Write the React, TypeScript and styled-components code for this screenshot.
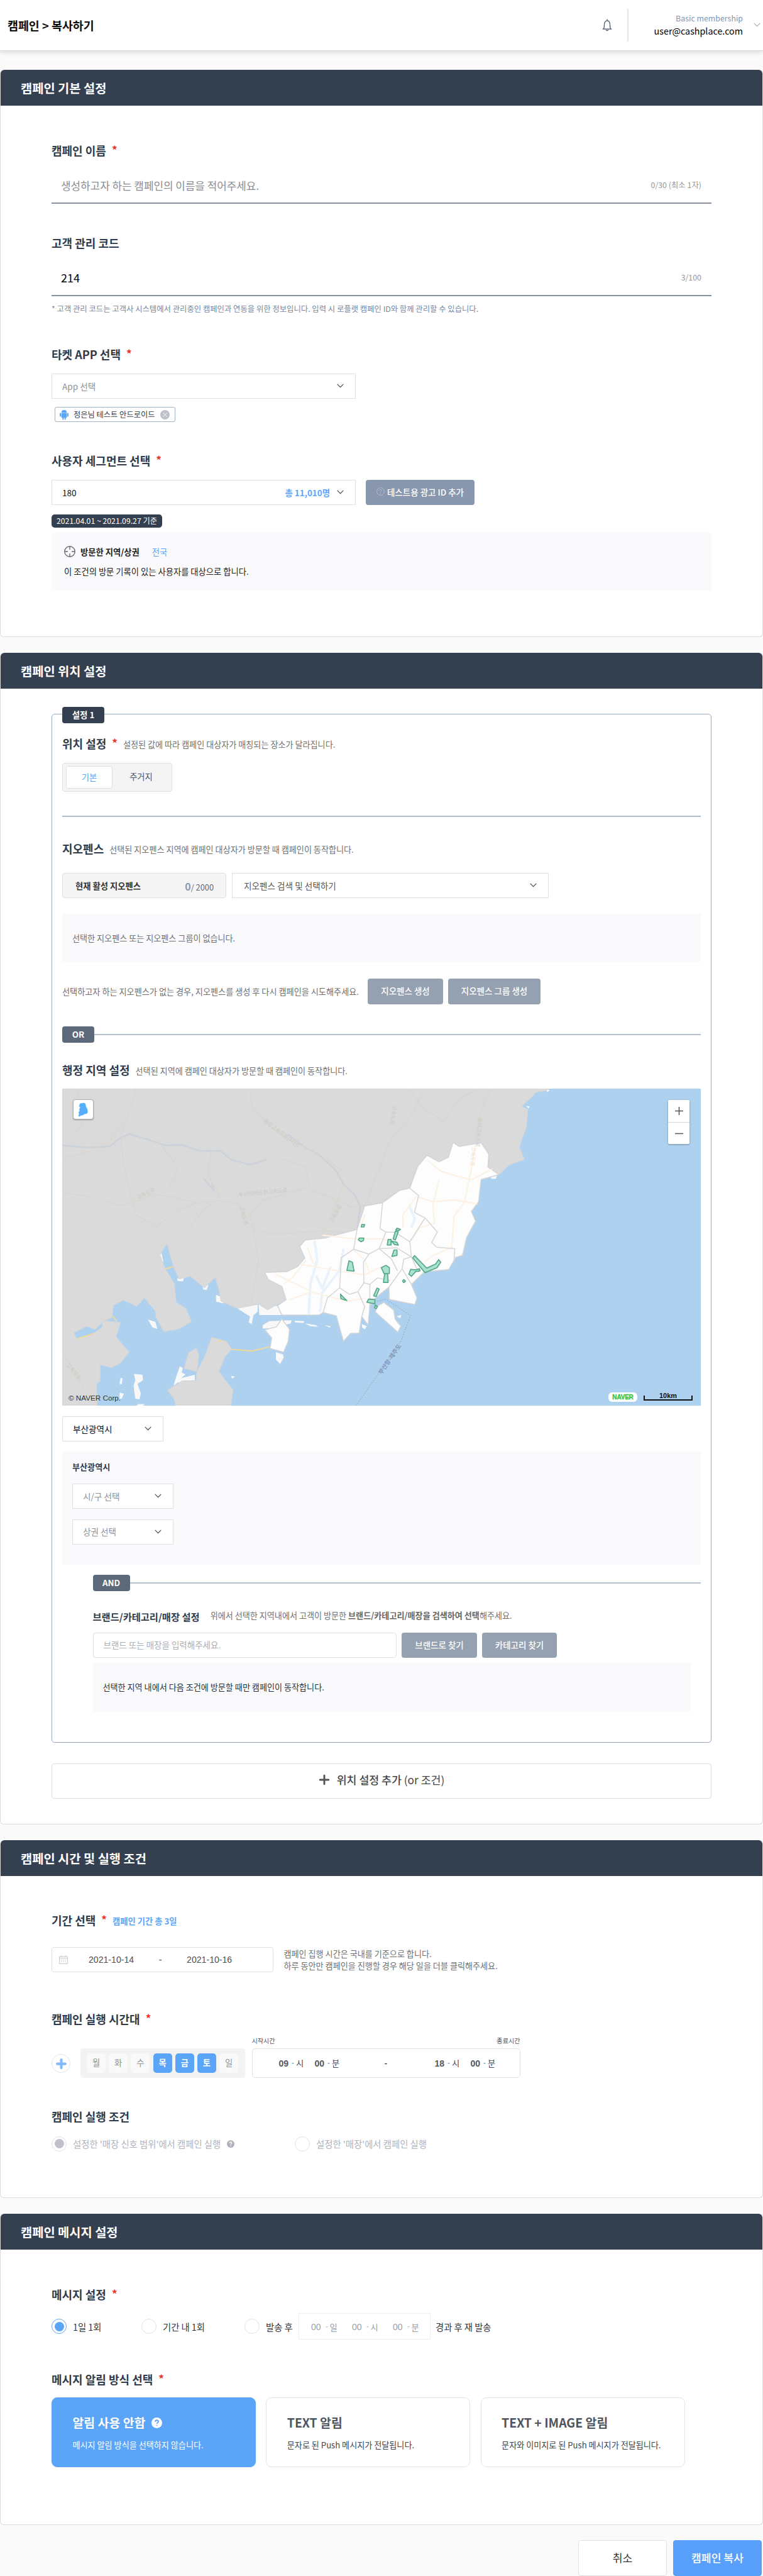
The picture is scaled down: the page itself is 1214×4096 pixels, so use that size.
import React from 'react';
import styled, { createGlobalStyle, css } from 'styled-components';

const sans = `'Noto Sans CJK KR', 'Noto Sans', sans-serif`;
const arial = `'Liberation Sans', 'Noto Sans CJK KR', sans-serif`;
const c = {
  navy: '#343f4f',
  ink: '#303b4b',
  slate: '#5c6979',
  blue: '#5ba5f8',
  muted: '#707070',
  pale: '#fafafc',
  line: '#dfe0e6',
  btn: '#95a1b0',
};

const Global = createGlobalStyle`
  * { box-sizing: border-box; }
  body { margin: 0; background: #fafafa; font-family: ${sans}; font-size: 13.2px; color: #222; }
  svg { display: block; flex: none; }
  button { font: inherit; padding: 0; margin: 0; }
`;

const Page = styled.div`
  width: 1214px;
  height: 4096px;
  overflow: hidden;
  background: #fafafa;
`;

/* ---------- top bar ---------- */
const TopBar = styled.header`
  height: 81px;
  display: flex;
  align-items: center;
  padding: 0 4px 1px 12px;
  background: #fff;
  border-bottom: 1px solid #d8d8d8;
  box-shadow: 0 2px 8px rgba(0, 0, 0, 0.14);
`;
const Crumb = styled.h1`
  margin: 0;
  flex: 1;
  font-size: 18.4px;
  font-weight: 700;
  color: #0c0c0c;
`;
const Divider = styled.i`
  width: 2px;
  height: 52px;
  margin-left: 24px;
  background: #e5e5e5;
`;
const Account = styled.div`
  width: 182px;
  margin-right: 17px;
  text-align: right;
  font-weight: 400;
  font-size: 14.3px;
  line-height: 20px;
  color: #000;
`;
const Plan = styled.div`
  font-size: 12.4px;
  font-weight: 400;
  line-height: 19px;
  color: #8295ad;
`;

/* ---------- cards ---------- */
const Card = styled.section<{ $top: number; $end: number }>`
  margin-top: ${p => p.$top}px;
  padding-bottom: ${p => p.$end}px;
  background: #fff;
  border: 1px solid #dcdcdc;
  border-top: 0;
  border-radius: 6px;
`;
const CardHead = styled.h2`
  margin: 0;
  height: 57px;
  padding-left: 32px;
  line-height: 58px;
  background: ${c.navy};
  border-radius: 6px 6px 0 0;
  font-size: 19.8px;
  font-weight: 700;
  color: #fff;
`;
const CardBody = styled.div`
  padding: 0 81px;
`;
const LabelRow = styled.div<{ $top: number }>`
  display: flex;
  align-items: center;
  height: 26px;
  margin-top: ${p => p.$top}px;
`;
const Label = styled.h3<{ $small?: boolean }>`
  margin: -1px 0 0;
  line-height: 26px;
  font-size: ${p => (p.$small ? 15.3 : 18)}px;
  font-weight: 700;
  color: ${c.ink};
  white-space: nowrap;
`;
const Star = styled.span`
  align-self: flex-start;
  margin: -1px 0 0 9px;
  line-height: 26px;
  font-size: 17px;
  font-weight: 700;
  color: #ee3124;
`;
const Desc = styled.span<{ $gap?: number; $blue?: boolean; $lift?: number }>`
  margin-left: ${p => p.$gap ?? 9}px;
  margin-top: ${p => p.$lift ?? 2}px;
  font-size: ${p => (p.$blue ? 13.3 : 13.1)}px;
  font-weight: ${p => (p.$blue ? 700 : 400)};
  color: ${p => (p.$blue ? c.blue : c.muted)};
  white-space: nowrap;
  b { font-weight: 700; color: #666; }
`;
const Row = styled.div<{ $top?: number; $gap?: number; $h?: number }>`
  display: flex;
  align-items: center;
  margin-top: ${p => p.$top ?? 0}px;
  gap: ${p => p.$gap ?? 0}px;
  ${p => p.$h && css`height: ${p.$h}px;`}
`;
const LineInput = styled.div<{ $top: number; $filled?: boolean }>`
  display: flex;
  align-items: center;
  justify-content: space-between;
  height: 58px;
  margin-top: ${p => p.$top}px;
  padding: 0 16px 0 15px;
  border-bottom: 2px solid ${p => (p.$filled ? '#8492a3' : '#8a92a0')};
  font-size: ${p => (p.$filled ? 18 : 16.9)}px;
  font-weight: 400;
  color: ${p => (p.$filled ? '#000' : '#8a8d92')};
`;
const Counter = styled.span`
  font-size: 12.4px;
  font-weight: 400;
  color: #94989e;
`;
const Hint = styled.p`
  margin: 10px 0 0;
  line-height: 20px;
  font-size: 12.35px;
  color: #7488a1;
`;
const SelectBox = styled.div<{ $w: number; $tone?: string; $pad?: number }>`
  display: flex;
  align-items: center;
  width: ${p => p.$w}px;
  height: 40px;
  padding: 0 18px 1px ${p => p.$pad ?? 16}px;
  background: #fff;
  border: 1px solid ${c.line};
  font-size: 13.6px;
  color: ${p => p.$tone ?? '#8e9298'};
  svg { margin-left: auto; }
`;
const Total = styled.b`
  margin-left: auto;
  margin-right: 11px;
  font-size: 13.4px;
  font-weight: 700;
  color: ${c.blue};
  & + svg { margin-left: 0; }
`;
const AppTag = styled.div`
  display: flex;
  align-items: center;
  width: 192px;
  height: 24px;
  margin: 13px 0 0 5px;
  padding: 0 8px 0 7px;
  border: 1px solid #a4b2c5;
  border-radius: 3px;
  font-size: 12.25px;
  color: #333b47;
  span { flex: 1; margin-left: 8px; }
`;
const Button = styled.button<{ $w: number; $tone?: string }>`
  display: flex;
  align-items: center;
  justify-content: center;
  gap: 4px;
  width: ${p => p.$w}px;
  height: 40.5px;
  padding-bottom: 3px;
  border: 0;
  border-radius: 4px;
  background: ${p => p.$tone ?? c.btn};
  font-size: 13.5px;
  font-weight: 500;
  color: #fff;
`;
const DateTag = styled.div`
  width: 176px;
  height: 21px;
  margin-top: 15px;
  border-radius: 5px;
  background: ${c.navy};
  line-height: 20px;
  text-align: center;
  font-size: 12.25px;
  color: #fff;
`;
const Panel = styled.div<{ $top: number; $h: number; $pad?: number; $tone?: string; $right?: number }>`
  display: flex;
  flex-direction: column;
  justify-content: center;
  height: ${p => p.$h}px;
  margin: ${p => p.$top}px ${p => p.$right ?? 0}px 0 0;
  padding-left: ${p => p.$pad ?? 16}px;
  padding-bottom: 1px;
  background: ${c.pale};
  font-size: 13.1px;
  color: ${p => p.$tone ?? c.muted};
`;
const VisitLine = styled.div`
  display: flex;
  align-items: center;
  gap: 8px;
  height: 24px;
  margin-bottom: 9px;
  font-size: 13.3px;
  b { font-weight: 700; color: #222; margin-right: 12px; }
  span { color: ${c.blue}; }
`;
const VisitNote = styled.div`
  height: 22px;
  line-height: 22px;
  font-size: 13.3px;
  color: #222;
`;

/* ---------- location group ---------- */
const Group = styled.div`
  height: 1636px;
  margin-top: 40px;
  padding: 0 16px;
  border: 1px solid #97a8bd;
  border-radius: 5px;
`;
const Badge = styled.div<{ $w: number; $tone: string }>`
  width: ${p => p.$w}px;
  height: 26px;
  flex: none;
  border-radius: 4px;
  background: ${p => p.$tone};
  line-height: 24px;
  text-align: center;
  font-size: 13.4px;
  font-weight: 700;
  color: #fff;
`;
const GroupBadge = styled(Badge)`
  margin-top: -12px;
`;
const Segmented = styled.div`
  display: flex;
  width: 175px;
  height: 46px;
  margin-top: 18px;
  padding: 4px 5px;
  background: #f4f4f4;
  border: 1px solid #e1e1e1;
  border-radius: 4px;
`;
const Segment = styled.div<{ $on?: boolean }>`
  flex: none;
  width: ${p => (p.$on ? 74 : 91)}px;
  line-height: 34px;
  text-align: center;
  font-size: 13.3px;
  border-radius: 4px;
  color: ${p => (p.$on ? c.blue : '#4c5562')};
  ${p => p.$on && css`background: #fff; border: 1px solid #dedede;`}
`;
const Rule = styled.hr`
  height: 2px;
  margin: 38px 0 0;
  border: 0;
  background: #b0bdcc;
`;
const ActiveCount = styled.div`
  display: flex;
  align-items: center;
  width: 261px;
  height: 40px;
  padding: 1px 19px 0 20px;
  background: #f5f5f5;
  border: 1px solid #dfe0e6;
  border-radius: 4px;
  font-size: 13.3px;
  font-weight: 700;
  color: #333;
  span { margin-left: auto; font-size: 12.8px; font-weight: 400; color: #5c6979; }
  b { font-size: 16px; font-weight: 700; color: #8799b0; }
`;
const RowText = styled.span`
  width: 486px;
  font-size: 13.15px;
  color: ${c.muted};
  white-space: nowrap;
`;
const Joint = styled.div<{ $top: number; $left?: number }>`
  display: flex;
  align-items: center;
  margin: ${p => p.$top}px 0 0 ${p => p.$left ?? 0}px;
  &::after { content: ''; flex: 1; height: 2px; margin-bottom: 1px; background: #b4c0ce; }
`;
const Nested = styled.div`
  margin-left: 48.5px;
`;
const AreaName = styled.b`
  line-height: 24px;
  margin-bottom: 14px;
  font-size: 13.1px;
  font-weight: 700;
  color: ${c.ink};
`;
const AreaPanel = styled.div`
  display: flex;
  flex-direction: column;
  height: 180px;
  margin-top: 16px;
  padding: 13px 0 0 16px;
  background: ${c.pale};
`;
const AreaSelects = styled.div`
  display: grid;
  gap: 16.5px;
`;
const SearchInput = styled.div`
  width: 483.5px;
  height: 40px;
  padding-left: 16px;
  line-height: 37px;
  border: 1px solid ${c.line};
  border-radius: 4px;
  font-size: 13.5px;
  color: #abb0b8;
`;
const AddButton = styled.button`
  display: flex;
  align-items: center;
  justify-content: center;
  gap: 11px;
  width: 100%;
  height: 56px;
  margin-top: 33px;
  padding-bottom: 5px;
  background: #fff;
  border: 1px solid #e0e0e0;
  border-radius: 4px;
  font-size: 17.3px;
  font-weight: 500;
  color: #444;
  em { font-style: normal; font-weight: 400; }
`;

/* ---------- map ---------- */
const MapFrame = styled.div`
  position: relative;
  height: 504px;
  margin-top: 17px;
  overflow: hidden;
  background: #aed1ef;
`;
const MapLabels = styled.svg`
  position: absolute;
  inset: 0;
`;
const RegionButton = styled.div`
  position: absolute;
  left: 17px;
  top: 17px;
  width: 33px;
  height: 32px;
  padding: 4px 7px;
  background: #fff;
  border: 1px solid #b0b0b0;
  border-radius: 4px;
  box-shadow: 0 1px 2px rgba(0, 0, 0, 0.3);
`;
const ZoomControl = styled.div`
  position: absolute;
  right: 18px;
  top: 18px;
  width: 34px;
  background: #fff;
  border-radius: 2px;
  box-shadow: 0 1px 3px rgba(0, 0, 0, 0.35);
`;
const ZoomStep = styled.div`
  display: flex;
  align-items: center;
  justify-content: center;
  height: 35px;
  & + & { border-top: 1px solid #d8d8d8; }
`;
const Copyright = styled.div`
  position: absolute;
  left: 10px;
  bottom: 3px;
  line-height: 18px;
  font-family: ${arial};
  font-size: 11.7px;
  color: #333;
`;
const NaverMark = styled.div`
  position: absolute;
  right: 101px;
  bottom: 6px;
  width: 46px;
  height: 15px;
  border-radius: 6px;
  background: #fff;
  line-height: 15px;
  text-align: center;
  font-family: ${arial};
  font-size: 10px;
  font-weight: 700;
  letter-spacing: -0.2px;
  color: #3fc43f;
  -webkit-text-stroke: 0.4px #3fc43f;
`;
const ScaleBar = styled.div`
  position: absolute;
  right: 13px;
  bottom: 8px;
  width: 78px;
  height: 8px;
  border: 2px solid #111;
  border-top: 0;
  line-height: 1px;
  text-align: center;
  font-family: ${arial};
  font-size: 11px;
  font-weight: 700;
  color: #111;
`;

/* ---------- schedule ---------- */
const DateRange = styled.div`
  display: flex;
  align-items: center;
  width: 353px;
  height: 40px;
  padding-left: 11px;
  border: 1px solid ${c.line};
  border-radius: 4px;
  font-family: ${arial};
  font-size: 14.1px;
  color: #4c4f55;
  i { font-style: normal; width: 84px; text-align: center; color: #444; }
`;
const DateText = styled.span<{ $first?: boolean }>`
  margin-left: ${p => (p.$first ? 33 : 0)}px;
`;
const Info = styled.p`
  margin: 0 0 0 16.5px;
  line-height: 19.5px;
  font-size: 13.1px;
  color: ${c.muted};
`;
const TimeRow = styled.div`
  display: flex;
  align-items: flex-end;
  margin-top: 15px;
`;
const AddTime = styled.div`
  display: flex;
  align-items: center;
  justify-content: center;
  width: 30px;
  height: 30px;
  margin: 0 16px 8px 0;
  border: 1px solid #e3e4e8;
  border-radius: 50%;
`;
const Week = styled.div`
  display: flex;
  align-items: center;
  gap: 5.2px;
  width: 262px;
  height: 47px;
  padding-left: 10px;
  background: #f3f3f3;
  border-radius: 4px;
`;
const Day = styled.span<{ $on: boolean }>`
  width: 30px;
  height: 31px;
  line-height: 29px;
  text-align: center;
  border-radius: 5px;
  font-size: 13.3px;
  background: ${p => (p.$on ? c.blue : '#f9f9f9')};
  color: ${p => (p.$on ? '#fff' : '#8e9299')};
  font-weight: ${p => (p.$on ? 700 : 400)};
`;
const TimeColumn = styled.div`
  width: 427px;
  margin-left: 10.5px;
`;
const TimeCaptions = styled.div`
  display: flex;
  justify-content: space-between;
  height: 19px;
  line-height: 14px;
  font-size: 10.1px;
  color: #4c5562;
`;
const TimeBox = styled.div`
  display: flex;
  align-items: center;
  height: 47px;
  padding-left: 42px;
  border: 1px solid ${c.line};
  border-radius: 5px;
`;
const Unit = styled.span<{ $w: number; $off?: boolean }>`
  display: flex;
  align-items: center;
  width: ${p => p.$w}px;
  font-size: 13.3px;
  color: ${p => (p.$off ? '#979da7' : '#3f4c60')};
  b {
    font-family: ${arial};
    font-size: 14px;
    font-weight: ${p => (p.$off ? 400 : 700)};
    color: ${p => (p.$off ? '#9a9fa8' : '#55585e')};
  }
`;
const Caret = styled.i<{ $off?: boolean }>`
  margin: 0 3px 0 ${p => (p.$off ? 7 : 5)}px;
  border: 2px solid transparent;
  border-top-color: ${p => (p.$off ? '#b8c4d6' : '#7c9cc4')};
  border-bottom: 0;
`;
const Dash = styled.i`
  width: 153px;
  padding-left: 73px;
  font-style: normal;
  font-family: ${arial};
  font-size: 14px;
  color: #222;
`;
const Radio = styled.span<{ $on?: boolean; $off?: boolean }>`
  display: flex;
  flex: none;
  align-items: center;
  justify-content: center;
  width: 24px;
  height: 24px;
  border-radius: 50%;
  border: 1px solid ${p => (p.$on && !p.$off ? c.blue : '#e0e1e6')};
  &::after {
    content: '';
    width: 15px;
    height: 15px;
    border-radius: 50%;
    background: ${p => (!p.$on ? 'transparent' : p.$off ? '#bfc2cb' : c.blue)};
  }
`;
const RadioText = styled.span<{ $off?: boolean; $w?: number; $gap?: number }>`
  ${p => p.$w && css`width: ${p.$w}px;`}
  display: flex;
  align-items: center;
  gap: 10px;
  margin-left: ${p => p.$gap ?? 10}px;
  font-size: ${p => (p.$off ? 14.35 : 14.3)}px;
  color: ${p => (p.$off ? '#b0b3bc' : '#33363c')};
  white-space: nowrap;
`;
const DelayBox = styled.div`
  display: flex;
  align-items: center;
  width: 210px;
  height: 41.5px;
  padding: 2px 0 0 19px;
  border: 1px solid #eeeeef;
`;
const Choice = styled.div<{ $on?: boolean }>`
  width: 325px;
  height: 111px;
  padding: 25px 0 0 32.5px;
  border: 1px solid ${p => (p.$on ? c.blue : '#e3e4ea')};
  border-radius: 9px;
  background: ${p => (p.$on ? c.blue : '#fff')};
  font-size: 13.1px;
  line-height: 22px;
  color: ${p => (p.$on ? '#fff' : '#3c4552')};
  h4 {
    display: flex;
    align-items: center;
    gap: 10px;
    height: 28px;
    margin: 0 0 11px;
    font-size: 19.4px;
    font-weight: 700;
    color: ${p => (p.$on ? '#fff' : '#4c5562')};
  }
`;
const Footer = styled.footer`
  display: flex;
  justify-content: flex-end;
  gap: 10px;
  margin-top: 24px;
  padding-right: 2px;
`;
const FootButton = styled.button<{ $primary?: boolean }>`
  width: 141px;
  height: 57px;
  padding-bottom: 3px;
  border: 1px solid ${p => (p.$primary ? '#589ff9' : '#e0e1e6')};
  border-radius: 4px;
  background: ${p => (p.$primary ? '#589ff9' : '#fff')};
  font-size: 17.2px;
  font-weight: ${p => (p.$primary ? 500 : 400)};
  color: ${p => (p.$primary ? '#fff' : '#333')};
`;

/* ---------- icons ---------- */
const Chevron = ({ color = '#444' }: { color?: string }) => (
  <svg width="11" height="7" viewBox="0 0 11 7" fill="none" stroke={color} strokeWidth="1.1">
    <path d="M.7.9 5.5 5.7 10.3.9" />
  </svg>
);
const Bell = () => (
  <svg width="16" height="20" viewBox="0 0 16 20" fill="none" stroke="#46536a" strokeWidth="1.3">
    <path d="M8 .6v2M.7 16.2h14.6M2.4 16c.9-1.1 1-2.6 1-5.3C3.4 6 4.9 2.8 8 2.8s4.6 3.2 4.6 7.9c0 2.700.1 4.200 1 5.300" />
    <path d="M6.300 17.300a1.700 1.400 0 0 0 3.400 0" />
  </svg>
);
const Android = () => (
  <svg width="14" height="17" viewBox="0 0 14 17" fill="#5ba5f8">
    <path d="M2.600 5.100a4.400 4 0 0 1 8.800 0z" />
    <path d="M4 .4 5.200 2M10 .4 8.800 2" stroke="#5ba5f8" strokeWidth=".7" />
    <rect x="2.600" y="5.600" width="8.800" height="7.600" rx=".8" />
    <rect x=".1" y="5.500" width="1.900" height="6" rx=".9" />
    <rect x="12" y="5.500" width="1.900" height="6" rx=".9" />
    <rect x="4.300" y="12" width="2" height="4.500" rx=".9" />
    <rect x="7.700" y="12" width="2" height="4.500" rx=".9" />
  </svg>
);
const CloseDot = () => (
  <svg width="15" height="15" viewBox="0 0 15 15">
    <circle cx="7.500" cy="7.500" r="7.500" fill="#bfc1c8" />
    <path d="m4.300 4.300 6.400 6.400m0-6.400-6.400 6.400" stroke="#fff" strokeWidth="1" />
  </svg>
);
const Question = ({ size, fill, mark, outline }: { size: number; fill: string; mark: string; outline?: boolean }) => (
  <svg width={size} height={size} viewBox="0 0 16 16">
    {outline ? <circle cx="8" cy="8" r="7.300" fill="none" stroke={fill} strokeWidth="1" /> : <circle cx="8" cy="8" r="8" fill={fill} />}
    <path
      d="M5.700 6.300c.1-1.500 1-2.300 2.300-2.300s2.300.8 2.300 2c0 1.600-2.200 1.700-2.200 3.500M8 11v1.500"
      fill="none"
      stroke={mark}
      strokeWidth={outline ? 1 : 1.700}
    />
  </svg>
);
const Target = () => (
  <svg width="18" height="18" viewBox="0 0 18 18" fill="none" stroke="#666a70" strokeWidth="1.400">
    <circle cx="9" cy="9" r="8.200" />
    <path d="M9 1v5M9 12v5M1 9h5M12 9h5" />
  </svg>
);
const Plus = ({ size, color, weight }: { size: number; color: string; weight: number }) => (
  <svg width={size} height={size} viewBox="0 0 16 16" stroke={color} strokeWidth={weight} strokeLinecap="round">
    <path d="M8 2v12M2 8h12" />
  </svg>
);
const Calendar = () => (
  <svg width="14" height="14" viewBox="0 0 14 14" fill="none" stroke="#c3c6ce" strokeWidth="1">
    <path d="M.6 1.900h12.800v11.500H.6zM.6 4.700h12.800M3.700.4v2.500M10.300.4v2.500" />
    <path d="M3 7.400h1.600M6.200 7.400h1.600M9.400 7.400H11M3 10.200h1.600M6.200 10.200h1.600M9.400 10.200H11" />
  </svg>
);
const Korea = () => (
  <svg width="17" height="23" viewBox="0 0 17 23" fill="#55aefb">
    <path d="M3.500 1.500 10 .4l2 1.800 1.200 5.200 2 3.400.4 5-1.600 2.200-3.700.6-2.200 1.700-3.100.5-3 1.800-1.200-1.300 1-3.200L1 15.600l1.700-2.200L2 10.400l1.600-2.200L1.600 5.500z" />
  </svg>
);

/* ---------- map drawing ---------- */
const grayLand = [
  '28,58 1178,58 1160,70 1142,75 1135,95 1120,120 1110,140 1124,155 1120,240 1112,280 1104,330 1116,385 1080,410 1056,455 1030,420 1032,360 1014,308 962,325 948,306 937,375 915,396 887,366 865,415 846,518 822,528 782,585 740,600 722,708 647,748 600,757 587,787 599,840 582,880 557,903 505,907 513,940 545,972 555,1033 511,1080 490,1053 440,1073 402,1040 397,985 388,930 363,978 330,925 303,937 290,880 282,830 275,772 258,825 268,880 292,960 296,1045 320,1075 332,1135 300,1170 267,1180 249,1115 247,1085 221,1024 204,1064 172,1035 149,1058 145,1115 126,1132 105,1170 85,1155 56,1185 62,1215 100,1190 122,1160 124,1130 165,1138 155,1205 186,1275 165,1325 145,1347 118,1333 117,1410 109,1425 110,1522 28,1522',
  '380,1207 415,1225 427,1262 410,1300 397,1365 430,1450 425,1522 295,1522 292,1495 276,1450 310,1408 343,1406 345,1365 362,1300',
  '343,1255 350,1290 345,1365 315,1350 325,1280',
];
const busan = [
  '948,306 962,325 1014,308 1032,360 1030,420 1056,455 1014,478 1008,580 991,625 1001,670 980,745 970,828 954,838 938,893 880,905 850,962 863,1025 858,1055 798,1032 797,975 765,1025 752,1060 748,1150 733,1110 727,1187 707,1188 690,1225 673,1107 642,1092 632,1104 545,1104 535,1060 555,1033 545,972 513,940 505,907 557,903 582,880 599,840 587,787 600,757 647,748 722,708 740,600 782,585 822,528 846,518 865,415 887,366 915,396 937,375',
  '785,1045 808,1080 812,1125 825,1155 818,1183 765,1090 768,1065',
  '545,1122 563,1170 560,1225 549,1275 517,1258 521,1210 505,1172 532,1158',
];
const shoals = [
  '490,1055 540,1062 545,1104 492,1104',
  '440,1073 488,1055 488,1088 478,1105 474,1145 467,1138 470,1110',
  '500,1150 515,1132 568,1128 566,1142 520,1165 500,1166',
  '390,1010 402,1020 408,1050 390,1042',
  '230,1125 247,1135 252,1168 240,1160',
  '197,1375 217,1380 218,1405 205,1422 213,1465 210,1493 200,1490 196,1430 200,1405',
  '305,1340 312,1350 309,1368 318,1378 308,1395 340,1380 340,1405 300,1415 290,1430 296,1390',
  '531,1275 548,1285 549,1300 541,1330 531,1310',
  '733,1145 745,1155 740,1170 734,1162',
  '815,1110 826,1102 824,1118',
  '1036,466 1052,458 1048,475 1038,474',
  '1165,64 1175,64 1171,74',
  '1120,138 1128,140 1126,150',
  '575,1130 598,1132 596,1140 576,1138',
  '600,1142 625,1150 630,1158 612,1155',
  '645,1150 660,1155 658,1162',
  '358,960 372,965 368,988 360,985',
  '255,810 262,820 266,858 258,858',
  '298,935 315,930 312,948 300,946',
  '165,1395 170,1395 168,1425 163,1420',
  '163,1462 173,1467 168,1490 163,1490',
  '205,1515 222,1515 218,1522 205,1522',
  '425,1385 435,1388 428,1397',
];
const districts = [
  'M846 518 867 552 857 630 882 655 911 720 898 768 909 790 952 797 950 860',
  'M882 655 846 765 812 722 790 720 776 705 782 585',
  'M846 765 850 835 832 845 828 890 797 975',
  'M790 720 774 797 750 822 714 800 722 708',
  'M774 797 815 793 850 835M774 797 803 845 817 900',
  'M714 800 685 838 681 978 704 1008 724 996 738 955 737 860 750 822',
  'M681 978 652 1025 642 1092M724 996 740 1065 733 1110',
  'M738 955 752 962 752 1060M752 962 770 932 800 945M828 890 850 962M850 835 866 905',
];
const zones = [
  '733,686 740,686 738,697 732,697',
  '727,748 738,748 737,760 731,765 725,757',
  '816,702 824,708 820,714 813,711',
  '812,717 819,719 812,757 807,752',
  '795,755 802,755 802,780 793,780',
  '803,762 816,768 819,781 810,778',
  '809,803 816,803 816,828 804,833',
  '703,853 711,860 715,901 698,898 701,870',
  '779,885 790,874 798,885 798,912 786,914',
  '787,914 794,912 795,953 784,953',
  '853,840 857,829 886,887 907,868 914,848 919,860 910,885 882,908',
  '848,893 860,895 869,890 870,900 860,903 850,925 844,915',
  '832,940 836,948 832,954 829,947',
  '769,979 774,984 767,1018 761,1015',
  '683,1007 690,1022 698,1037 684,1028',
  '749,1030 764,1032 764,1052 745,1045',
  '765,1058 770,1064 767,1075 763,1070',
];
const grayRoads = [
  'M28 540 90 555 165 598 210 575 240 545 290 560 345 585 400 575 440 590 470 640 500 575 600 515 660 560 710 605 770 590 822 528',
  'M200 58 190 150 165 270 172 400 190 560 200 640 250 695 300 620 345 585',
  'M470 58 475 140 520 240 570 300 640 370 690 440',
  'M470 640 480 720 490 860 472 1055',
  'M480 710 530 730 640 715 690 720',
  'M880 58 850 180 800 300 780 400 770 450 740 600',
  'M845 65 880 150 925 210 965 100 1010 58',
  'M1035 58 1010 190 1000 290',
  'M28 380 90 350 140 300 170 210 M60 58 90 180 60 260',
  'M250 290 300 420 280 520 M380 340 370 450 400 560',
  'M690 500 665 620 640 740 M28 1290 60 1360 80 1450',
  'M320 720 360 620 380 590 M540 380 600 420 610 510',
];
const rivers = [
  'M28 320 90 330 140 325 165 285 185 268 225 290 270 320 310 318 350 345 400 345 425 385 470 410 510 385',
  'M560 270 600 330 630 360 670 430 690 500 715 545 730 600 722 708',
  'M360 470 385 530 380 490',
];
const cityRoads = [
  'M1000 320 990 440 975 580 950 650 945 790 900 830 880 860',
  'M860 555 900 580 950 572 1005 590M885 385 920 440 990 480 1040 430',
  'M915 480 900 600 905 680 870 700 850 760M640 735 720 752 780 752 810 770',
  'M590 870 680 900 740 918 780 880M715 805 740 850 750 900',
  'M530 915 620 1000 700 1040 740 1025M560 1035 610 1000M860 560 830 640 830 700',
  'M602 850 570 930 550 960M740 640 730 700M620 870 605 790',
];
const streams = ['M622 760 628 850 612 960 608 1100', 'M690 800 680 900 640 1000 635 1090', 'M845 600 858 660 850 700', 'M625 920 640 980 660 880'];

const MapArt = () => (
  <svg width="1016" height="504" viewBox="28 58 1503 1464" preserveAspectRatio="none" fill="none" strokeLinejoin="round">
    <rect x="28" y="58" width="1503" height="1464" fill="#aed1ef" />
    {shoals.map(p => <polygon key={p} points={p} fill="#f8f8f8" />)}
    {grayLand.map(p => <polygon key={p} points={p} fill="#dadada" stroke="#d3d6d9" vectorEffect="non-scaling-stroke" />)}
    {rivers.map(d => <path key={d} d={d} stroke="#cbd2da" strokeWidth="2.500" vectorEffect="non-scaling-stroke" />)}
    {grayRoads.map(d => <path key={d} d={d} stroke="#d9d5cf" strokeWidth="1.500" vectorEffect="non-scaling-stroke" />)}
    {busan.map(p => <polygon key={p} points={p} fill="#fdfdfd" stroke="#d2d5d7" strokeWidth="1.500" vectorEffect="non-scaling-stroke" />)}
    {streams.map(d => <path key={d} d={d} stroke="#eaf3fb" strokeWidth="4" vectorEffect="non-scaling-stroke" />)}
    {cityRoads.map(d => <path key={d} d={d} stroke="#fdf1e4" strokeWidth="2" vectorEffect="non-scaling-stroke" />)}
    {districts.map(d => <path key={d} d={d} stroke="#d6d6d8" strokeWidth="1.500" vectorEffect="non-scaling-stroke" />)}
    {zones.map(p => <polygon key={p} points={p} fill="#abe2ce" stroke="#56a88b" strokeWidth="1.700" vectorEffect="non-scaling-stroke" />)}
    <path d="M427 1262 475 1270 516 1250M63 1213 102 1189M146 1108 156 1132M272 890 288 880M395 1222 405 1225" stroke="#f0d999" strokeWidth="2" vectorEffect="non-scaling-stroke" />
    <path d="M770 1040 790 1030 848 1107 825 1225 720 1522" stroke="#8fa6c4" strokeDasharray="2 2" vectorEffect="non-scaling-stroke" />
  </svg>
);

const roadNames = [
  { x: 320, y: 52, r: 38, t: '중앙고속도로(지선)', f: '#cdc8c3' },
  { x: 526, y: 26, r: 98, t: '고속도로', f: '#cdc8c3' },
  { x: 281, y: 172, r: -6, t: '부산외곽순환고속도로', f: '#cdc8c3' },
  { x: 120, y: 176, r: -25, t: '고속도로', f: '#cdc8c3' },
  { x: 662, y: 46, r: 95, t: '동해고속도로', f: '#d1cbc4' },
  { x: 652, y: 92, r: 95, t: '고속도로', f: '#efe3d6' },
  { x: 430, y: 214, r: -62, t: '고속도로', f: '#cdc8c3' },
  { x: 281, y: 188, r: 72, t: '고속도로', f: '#cdc8c3' },
  { x: 6, y: 440, r: 50, t: '고속도로', f: '#cdc8c3' },
];

const NaverMap = () => (
  <MapFrame>
    <MapArt />
    <MapLabels width="1016" height="504" fontSize="8.500" fontFamily="Noto Sans CJK KR">
      {roadNames.map(n => (
        <text key={`${n.x}-${n.y}`} x={n.x} y={n.y} fill={n.f} transform={`rotate(${n.r} ${n.x} ${n.y})`}>{n.t}</text>
      ))}
      <text x="508" y="455" fontSize="9.500" fontWeight="700" fill="#8298b8" transform="rotate(-55 508 455)">부산항-제주도</text>
    </MapLabels>
    <RegionButton><Korea /></RegionButton>
    <ZoomControl>
      <ZoomStep><svg width="13" height="13" stroke="#555" strokeWidth="1.500"><path d="M6.500 0v13M0 6.500h13" /></svg></ZoomStep>
      <ZoomStep><svg width="13" height="13" stroke="#555" strokeWidth="1.500"><path d="M0 6.500h13" /></svg></ZoomStep>
    </ZoomControl>
    <Copyright>© NAVER Corp.</Copyright>
    <NaverMark>NAVER</NaverMark>
    <ScaleBar>10km</ScaleBar>
  </MapFrame>
);

/* ---------- shared pieces ---------- */
type HeadingProps = { top: number; text: string; required?: boolean; children?: React.ReactNode };
const Heading = ({ top, text, required, children }: HeadingProps) => (
  <LabelRow $top={top}>
    <Label>{text}</Label>
    {required && <Star>*</Star>}
    {children}
  </LabelRow>
);
const Select = ({ w, text, tone, pad, total }: { w: number; text: string; tone?: string; pad?: number; total?: string }) => (
  <SelectBox $w={w} $tone={tone} $pad={pad}>
    {text}
    {total && <Total>{total}</Total>}
    <Chevron />
  </SelectBox>
);
const TimeUnit = ({ w, n, unit, off }: { w: number; n: string; unit: string; off?: boolean }) => (
  <Unit $w={w} $off={off}><b>{n}</b><Caret $off={off} />{unit}</Unit>
);

const BasicCard = () => (
  <Card $top={30} $end={73}>
    <CardHead>캠페인 기본 설정</CardHead>
    <CardBody>
      <Heading top={58} text="캠페인 이름" required />
      <LineInput $top={14}>생성하고자 하는 캠페인의 이름을 적어주세요.<Counter>0/30 (최소 1자)</Counter></LineInput>
      <Heading top={49} text="고객 관리 코드" />
      <LineInput $top={14} $filled>214<Counter>3/100</Counter></LineInput>
      <Hint>* 고객 관리 코드는 고객사 시스템에서 관리중인 캠페인과 연동을 위한 정보입니다. 입력 시 로플랫 캠페인 ID와 함께 관리할 수 있습니다.</Hint>
      <Heading top={49} text="타켓 APP 선택" required />
      <Row $top={18}><Select w={484} text="App 선택" /></Row>
      <AppTag><Android /><span>정은님 테스트 안드로이드</span><CloseDot /></AppTag>
      <Heading top={48} text="사용자 세그먼트 선택" required />
      <Row $top={18} $gap={16} $h={40}>
        <Select w={484} text="180" tone="#111" total="총 11,010명" />
        <Button $w={173} $tone="#8897ad">
          <Question size={13} fill="#b9c3d1" mark="#b9c3d1" outline />테스트용 광고 ID 추가
        </Button>
      </Row>
      <DateTag>2021.04.01 ~ 2021.09.27 기준</DateTag>
      <Panel $top={8} $h={92} $pad={20}>
        <VisitLine><Target /><b>방문한 지역/상권</b><span>전국</span></VisitLine>
        <VisitNote>이 조건의 방문 기록이 있는 사용자를 대상으로 합니다.</VisitNote>
      </Panel>
    </CardBody>
  </Card>
);

const LocationCard = () => (
  <Card $top={25} $end={40}>
    <CardHead>캠페인 위치 설정</CardHead>
    <CardBody>
      <Group>
        <GroupBadge $w={67} $tone={c.navy}>설정 1</GroupBadge>
        <Heading top={19} text="위치 설정" required>
          <Desc>설정된 값에 따라 캠페인 대상자가 매칭되는 장소가 달라집니다.</Desc>
        </Heading>
        <Segmented><Segment $on>기본</Segment><Segment>주거지</Segment></Segmented>
        <Rule />
        <Heading top={37} text="지오펜스">
          <Desc>선택된 지오펜스 지역에 캠페인 대상자가 방문할 때 캠페인이 동작합니다.</Desc>
        </Heading>
        <Row $top={26} $gap={9}>
          <ActiveCount>현재 활성 지오펜스<span><b>0</b>/ 2000</span></ActiveCount>
          <Select w={504} text="지오펜스 검색 및 선택하기" tone="#555" pad={18} />
        </Row>
        <Panel $top={25} $h={77}>선택한 지오펜스 또는 지오펜스 그룹이 없습니다.</Panel>
        <Row $top={26} $h={41}>
          <RowText>선택하고자 하는 지오펜스가 없는 경우, 지오펜스를 생성 후 다시 캠페인을 시도해주세요.</RowText>
          <Row $gap={8}><Button $w={120}>지오펜스 생성</Button><Button $w={147}>지오펜스 그룹 생성</Button></Row>
        </Row>
        <Joint $top={35}><Badge $w={51} $tone={c.slate}>OR</Badge></Joint>
        <Heading top={30} text="행정 지역 설정">
          <Desc>선택된 지역에 캠페인 대상자가 방문할 때 캠페인이 동작합니다.</Desc>
        </Heading>
        <NaverMap />
        <Row $top={17}><Select w={161} text="부산광역시" tone="#111" /></Row>
        <AreaPanel>
          <AreaName>부산광역시</AreaName>
          <AreaSelects>
            <Select w={161} text="시/구 선택" />
            <Select w={161} text="상권 선택" />
          </AreaSelects>
        </AreaPanel>
        <Nested>
          <Joint $top={16}><Badge $w={59} $tone={c.slate}>AND</Badge></Joint>
          <LabelRow $top={27}>
            <Label $small>브랜드/카테고리/매장 설정</Label>
            <Desc $gap={17} $lift={-3}>위에서 선택한 지역내에서 고객이 방문한 <b>브랜드/카테고리/매장을 검색하여 선택</b>해주세요.</Desc>
          </LabelRow>
          <Row $top={13} $gap={8} $h={40}>
            <SearchInput>브랜드 또는 매장을 입력해주세요.</SearchInput>
            <Button $w={120}>브랜드로 찾기</Button>
            <Button $w={119}>카테고리 찾기</Button>
          </Row>
          <Panel $top={8} $h={78} $tone="#28323f" $right={16}>선택한 지역 내에서 다음 조건에 방문할 때만 캠페인이 동작합니다.</Panel>
        </Nested>
      </Group>
      <AddButton><Plus size={18} color="#555" weight={2.6} /><span>위치 설정 추가 <em>(or 조건)</em></span></AddButton>
    </CardBody>
  </Card>
);

const days = ['월', '화', '수', '목', '금', '토', '일'];
const activeDays = new Set(['목', '금', '토']);

const ScheduleCard = () => (
  <Card $top={25} $end={73}>
    <CardHead>캠페인 시간 및 실행 조건</CardHead>
    <CardBody>
      <Heading top={57} text="기간 선택" required><Desc $blue>캠페인 기간 총 3일</Desc></Heading>
      <Row $top={30} $h={40}>
        <DateRange>
          <Calendar /><DateText $first>2021-10-14</DateText><i>-</i><DateText>2021-10-16</DateText>
        </DateRange>
        <Info>캠페인 집행 시간은 국내를 기준으로 합니다.<br />하루 동안만 캠페인을 진행할 경우 해당 일을 더블 클릭해주세요.</Info>
      </Row>
      <Heading top={61} text="캠페인 실행 시간대" required />
      <TimeRow>
        <AddTime><Plus size={17} color="#85bafa" weight={4} /></AddTime>
        <Week>{days.map(d => <Day key={d} $on={activeDays.has(d)}>{d}</Day>)}</Week>
        <TimeColumn>
          <TimeCaptions><span>시작시간</span><span>종료시간</span></TimeCaptions>
          <TimeBox>
            <TimeUnit w={57} n="09" unit="시" />
            <TimeUnit w={38} n="00" unit="분" />
            <Dash>-</Dash>
            <TimeUnit w={57} n="18" unit="시" />
            <TimeUnit w={38} n="00" unit="분" />
          </TimeBox>
        </TimeColumn>
      </TimeRow>
      <Heading top={48} text="캠페인 실행 조건" />
      <Row $top={18} $h={25}>
        <Radio $on $off />
        <RadioText $off $w={353}>설정한 '매장 신호 범위'에서 캠페인 실행<Question size={12} fill="#b0b3bb" mark="#fff" /></RadioText>
        <Radio />
        <RadioText $off>설정한 '매장'에서 캠페인 실행</RadioText>
      </Row>
    </CardBody>
  </Card>
);

const MessageCard = () => (
  <Card $top={25} $end={91}>
    <CardHead>캠페인 메시지 설정</CardHead>
    <CardBody>
      <Heading top={58} text="메시지 설정" required />
      <Row $top={17} $h={42}>
        <Radio $on />
        <RadioText $w={109}>1일 1회</RadioText>
        <Radio />
        <RadioText $w={130}>기간 내 1회</RadioText>
        <Radio />
        <RadioText $w={52}>발송 후</RadioText>
        <DelayBox>
          <TimeUnit w={65} n="00" unit="일" off />
          <TimeUnit w={65} n="00" unit="시" off />
          <TimeUnit w={50} n="00" unit="분" off />
        </DelayBox>
        <RadioText $gap={8}>경과 후 재 발송</RadioText>
      </Row>
      <Heading top={50} text="메시지 알림 방식 선택" required />
      <Row $top={16} $gap={16.3}>
        <Choice $on><h4>알림 사용 안함<Question size={17} fill="#fff" mark="#5ba5f8" /></h4>메시지 알림 방식을 선택하지 않습니다.</Choice>
        <Choice><h4>TEXT 알림</h4>문자로 된 Push 메시지가 전달됩니다.</Choice>
        <Choice><h4>TEXT + IMAGE 알림</h4>문자와 이미지로 된 Push 메시지가 전달됩니다.</Choice>
      </Row>
    </CardBody>
  </Card>
);

export default function App() {
  return (
    <Page>
      <Global />
      <TopBar>
        <Crumb>캠페인 &gt; 복사하기</Crumb>
        <Bell />
        <Divider />
        <Account><Plan>Basic membership</Plan>user@cashplace.com</Account>
        <Chevron color="#aaa" />
      </TopBar>
      <BasicCard />
      <LocationCard />
      <ScheduleCard />
      <MessageCard />
      <Footer>
        <FootButton>취소</FootButton>
        <FootButton $primary>캠페인 복사</FootButton>
      </Footer>
    </Page>
  );
}
